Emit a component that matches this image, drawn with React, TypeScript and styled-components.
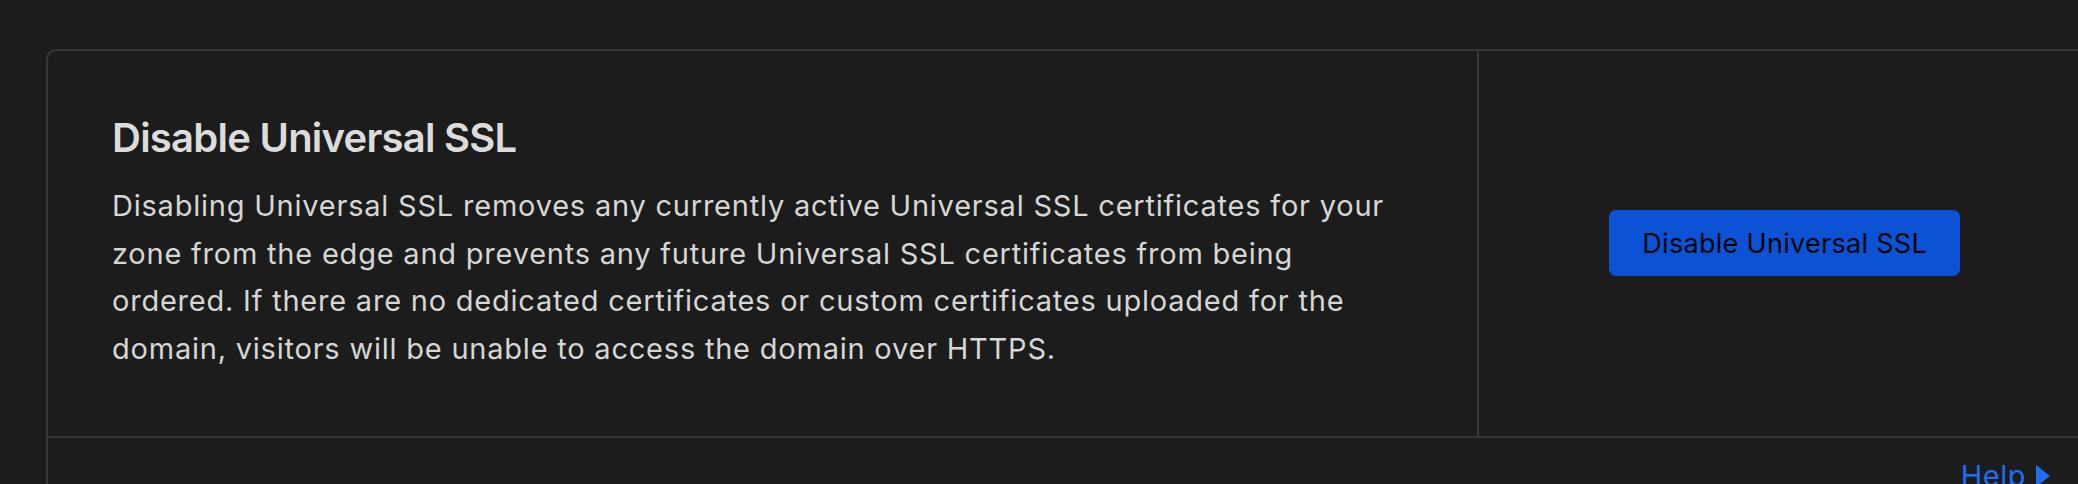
import React from "react";
import styled, { createGlobalStyle } from "styled-components";

const GlobalStyle = createGlobalStyle`
  html, body {
    margin: 0;
    padding: 0;
    background: #1c1c1c;
    overflow: hidden;
  }
  body {
    font-family: "Inter", "Noto Sans", sans-serif;
    -webkit-font-smoothing: antialiased;
  }
`;

const Page = styled.div`
  padding: 49px 0 0 46px;
  min-height: 484px;
  box-sizing: border-box;
`;

const Card = styled.section`
  width: 2046px;
  box-sizing: border-box;
  border: 2px solid #383838;
  border-radius: 10px;
  background: #1c1c1c;
`;

const Row = styled.div`
  display: grid;
  grid-template-columns: 70% 30%;
`;

const Info = styled.div`
  padding: 63px 66px 63px 64px;
`;

const Title = styled.h2`
  margin: 0 0 20px;
  font-size: 40px;
  line-height: 48px;
  font-weight: 600;
  letter-spacing: -0.75px;
  color: #dcdcdc;
`;

const Body = styled.p`
  margin: 0;
  max-width: 1290px;
  font-size: 29px;
  line-height: 47.7px;
  font-weight: 400;
  letter-spacing: 0.78px;
  color: #d6d6d6;
`;

const Action = styled.div`
  border-left: 2px solid #383838;
  display: flex;
  align-items: center;
  justify-content: center;
`;

const PrimaryButton = styled.button`
  height: 66px;
  padding: 0 33px;
  border: none;
  border-radius: 7px;
  background: #0b52d5;
  color: #050505;
  font-family: inherit;
  font-size: 27px;
  font-weight: 400;
  letter-spacing: 0.3px;
  cursor: pointer;
`;

const Footer = styled.div`
  border-top: 2px solid #383838;
  display: flex;
  justify-content: flex-end;
  padding: 14px 40px 16px 0;
`;

const HelpLink = styled.a`
  display: inline-flex;
  align-items: center;
  gap: 10px;
  font-size: 29px;
  line-height: 47.7px;
  letter-spacing: 0.5px;
  color: #1d6ef2;
  text-decoration: none;
  cursor: pointer;
`;

const Caret = () => (
  <svg width="14" height="22" viewBox="0 0 14 22" aria-hidden="true">
    <path d="M0 0 L14 11 L0 22 Z" fill="currentColor" />
  </svg>
);

export default function App() {
  return (
    <>
      <GlobalStyle />
      <Page>
        <Card>
          <Row>
            <Info>
              <Title>Disable Universal SSL</Title>
              <Body>
                Disabling Universal SSL removes any currently active Universal SSL certificates for your
                zone from the edge and prevents any future Universal SSL certificates from being
                ordered. If there are no dedicated certificates or custom certificates uploaded for the
                domain, visitors will be unable to access the domain over HTTPS.
              </Body>
            </Info>
            <Action>
              <PrimaryButton>Disable Universal SSL</PrimaryButton>
            </Action>
          </Row>
          <Footer>
            <HelpLink>
              Help
              <Caret />
            </HelpLink>
          </Footer>
        </Card>
      </Page>
    </>
  );
}
